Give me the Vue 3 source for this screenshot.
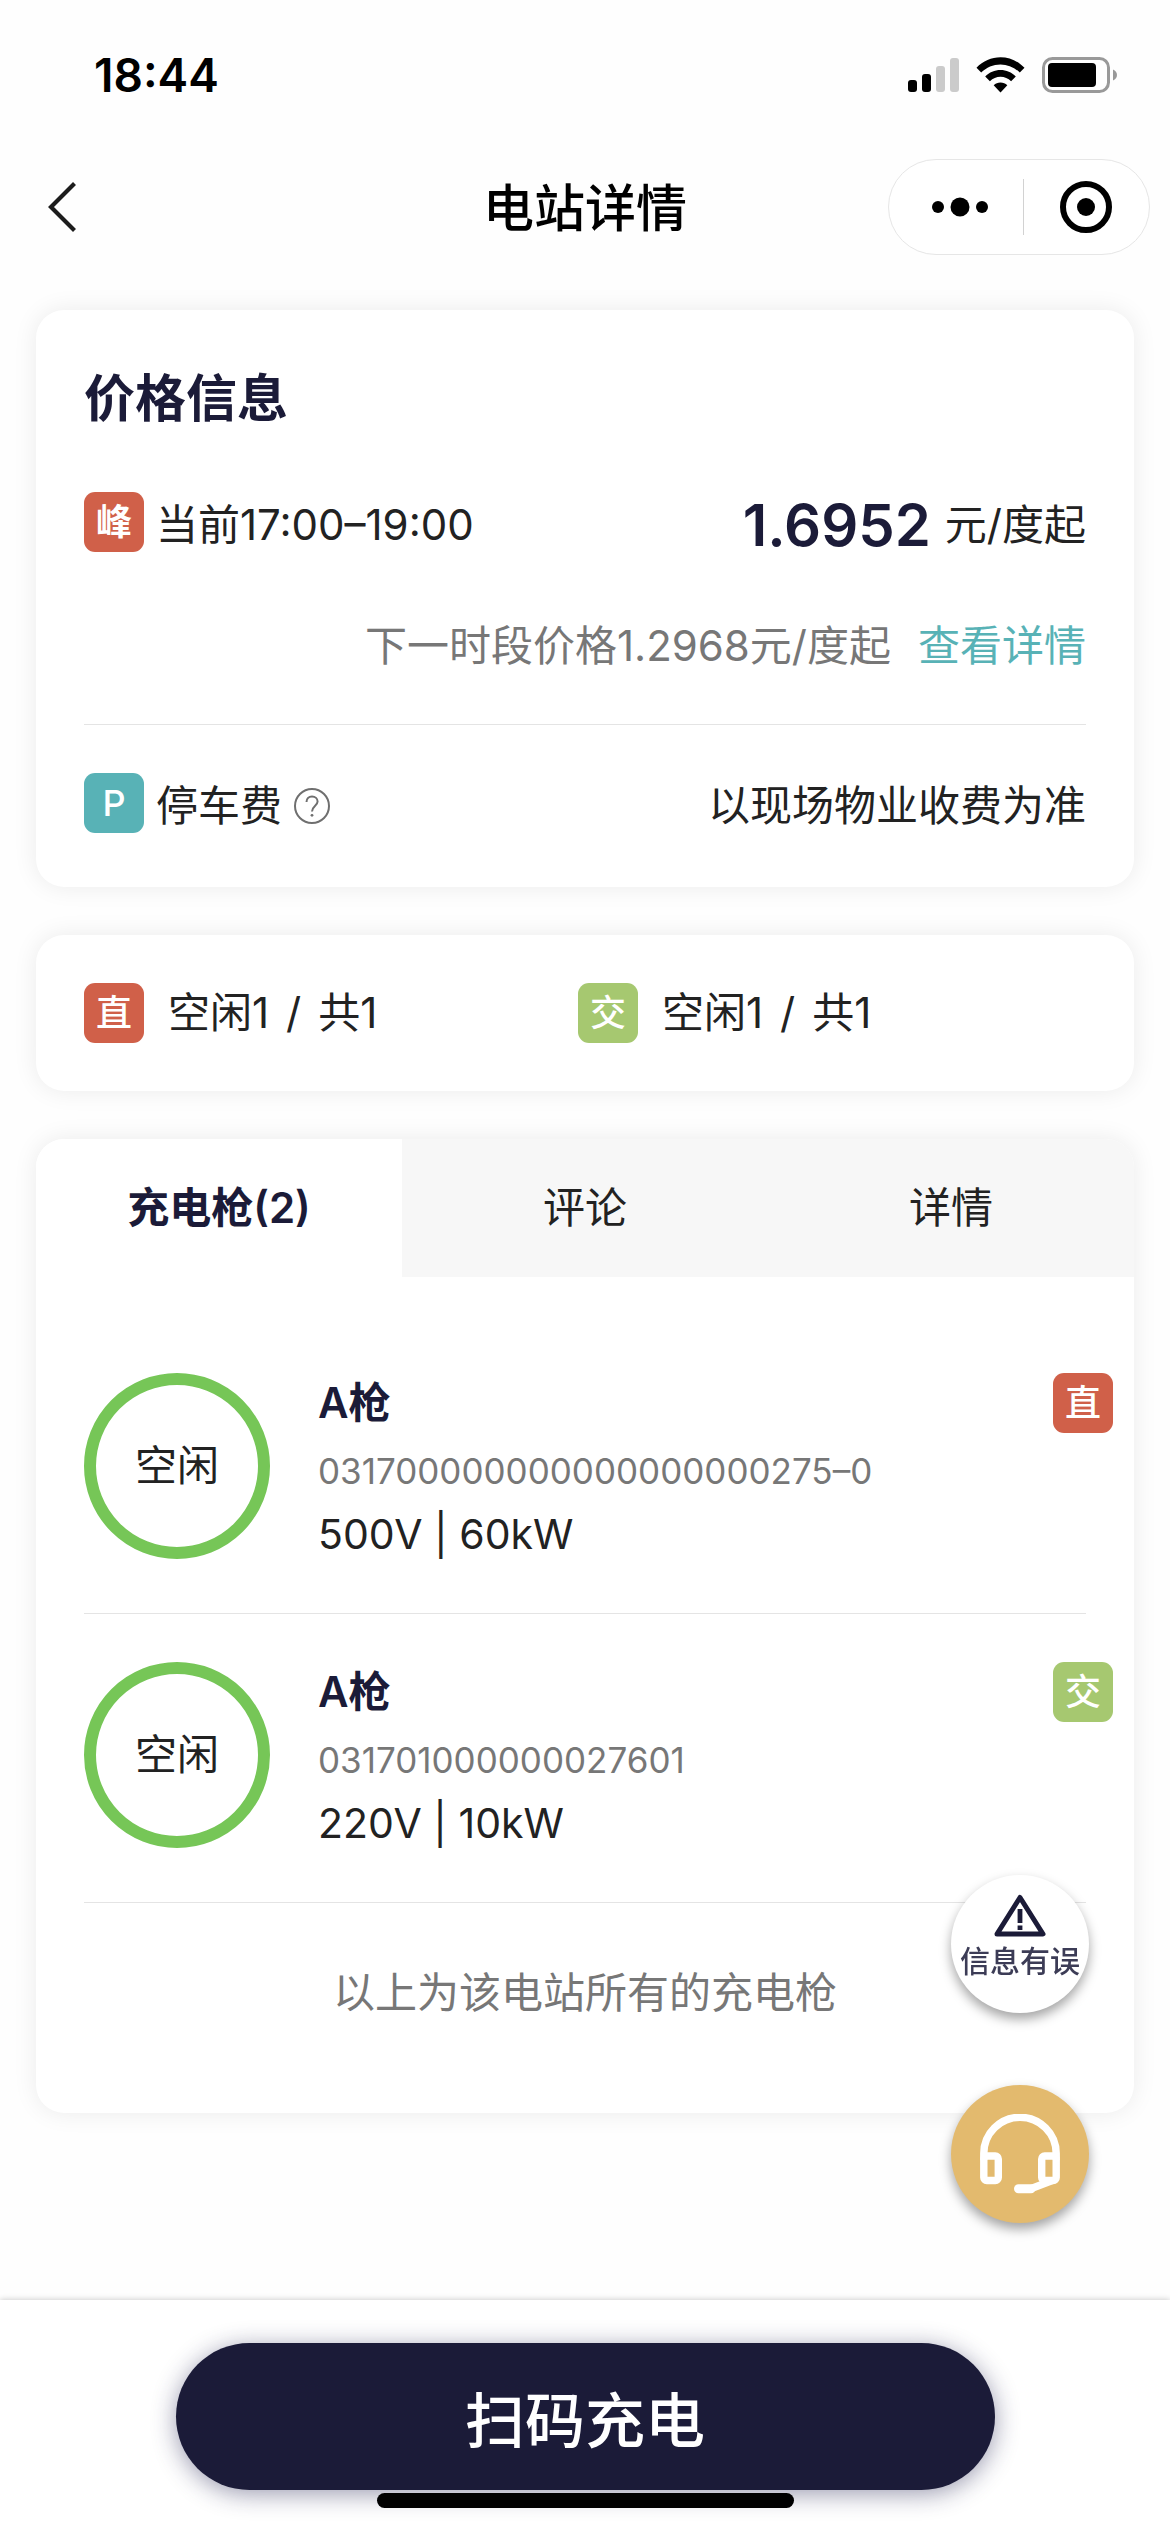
<script setup>
import { ref } from 'vue'

const tabs = ['充电枪(2)', '评论', '详情']
const activeTab = ref(0)

const summary = [
  { kind: 'dc', label: '直', free: '空闲1', total: '共1' },
  { kind: 'ac', label: '交', free: '空闲1', total: '共1' },
]

const guns = [
  { name: 'A枪', id: '031700000000000000000275–0', spec: '500V | 60kW', status: '空闲', kind: 'dc', label: '直' },
  { name: 'A枪', id: '031701000000027601', spec: '220V | 10kW', status: '空闲', kind: 'ac', label: '交' },
]
</script>

<template>
  <div class="page">
    <header class="top">
      <div class="status">
        <span class="clock">18:44</span>
        <div class="indicators">
          <svg width="51" height="36" viewBox="0 0 51 36" aria-hidden="true">
            <rect x="0" y="23" width="9" height="12" rx="3" />
            <rect x="14" y="17" width="9" height="18" rx="3" />
            <rect x="28" y="9" width="9" height="26" rx="3" fill="#cbcbcb" />
            <rect x="42" y="1" width="9" height="34" rx="3" fill="#cbcbcb" />
          </svg>
          <svg class="wifi" width="49" height="36" viewBox="0 0 49 36" aria-hidden="true">
            <path d="M0.500 10.800C7 4 15.500 0.300 24.500 0.300S42 4 48.500 10.800L43.800 15.600C38.600 10.200 31.800 7.400 24.500 7.400S10.400 10.200 5.200 15.600Z" />
            <path d="M9.200 19.400C13.300 15.300 18.700 13 24.500 13S35.700 15.300 39.800 19.400L35.100 24.200C32.200 21.400 28.500 19.800 24.500 19.800S16.800 21.400 13.900 24.200Z" />
            <path d="M17.700 28.200C19.500 26.500 21.900 25.500 24.500 25.500S29.500 26.500 31.300 28.200L24.500 35.500Z" />
          </svg>
          <svg width="76" height="36" viewBox="0 0 76 36" aria-hidden="true">
            <rect x="1.500" y="1.500" width="65" height="33" rx="9" fill="none" stroke="#999" stroke-width="3" />
            <rect x="6" y="6" width="48" height="24" rx="4" />
            <path d="M71 12.500C73.500 13.500 75 15.500 75 18S73.500 22.500 71 23.500Z" fill="#999" />
          </svg>
        </div>
      </div>
      <nav class="nav">
        <button class="back" type="button" aria-label="返回">
          <svg width="30" height="50" viewBox="0 0 30 50" aria-hidden="true">
            <path d="M26.500 1.500L3 25L26.500 48.500" fill="none" stroke="#1c1c1c" stroke-width="4.200" />
          </svg>
        </button>
        <h1 class="nav-title">电站详情</h1>
        <div class="capsule">
          <button class="cap-btn more" type="button" aria-label="更多">
            <svg width="58" height="20" viewBox="0 0 58 20" aria-hidden="true">
              <circle cx="7" cy="10" r="6" />
              <circle cx="29" cy="10" r="9.500" />
              <circle cx="51" cy="10" r="6" />
            </svg>
          </button>
          <span class="cap-line"></span>
          <button class="cap-btn" type="button" aria-label="关闭">
            <svg width="52" height="52" viewBox="0 0 52 52" aria-hidden="true">
              <circle cx="26" cy="26" r="23" fill="none" stroke="#000" stroke-width="6" />
              <circle cx="26" cy="26" r="9" />
            </svg>
          </button>
        </div>
      </nav>
    </header>

    <main class="content">
      <section class="card price">
        <h2 class="card-title">价格信息</h2>
        <div class="row">
          <span class="badge peak">峰</span>
          <span class="row-label">当前17:00–19:00</span>
          <strong class="amount">1.6952</strong>
          <span class="unit">元/度起</span>
        </div>
        <p class="next">
          <span>下一时段价格1.2968元/度起</span>
          <a class="link" href="#detail">查看详情</a>
        </p>
        <div class="row parking">
          <span class="badge park">P</span>
          <span class="row-label">停车费</span>
          <button class="help" type="button" aria-label="停车费说明">
            <svg width="38" height="38" viewBox="0 0 38 38" fill="none" stroke="#6f6f6f" stroke-width="2" aria-hidden="true">
              <circle cx="19" cy="19" r="17" />
              <path d="M13.500 15C13.500 11.500 15.800 9.400 19 9.400S24.600 11.600 24.600 14.600C24.600 18.600 19 19 19 24.600" />
              <circle cx="19" cy="28.300" r="1.400" fill="#6f6f6f" stroke="none" />
            </svg>
          </button>
          <span class="fee">以现场物业收费为准</span>
        </div>
      </section>

      <section class="card summary">
        <div v-for="item in summary" :key="item.kind" class="summary-item">
          <span class="badge" :class="item.kind">{{ item.label }}</span>
          <span class="count">
            <span>{{ item.free }}</span>
            <span>/</span>
            <span>{{ item.total }}</span>
          </span>
        </div>
      </section>

      <section class="card guns">
        <div class="tabs" role="tablist">
          <button
            v-for="(tab, i) in tabs"
            :key="tab"
            type="button"
            role="tab"
            class="tab"
            :class="{ active: i === activeTab }"
            :aria-selected="i === activeTab"
            @click="activeTab = i"
          >{{ tab }}</button>
        </div>
        <ul class="gun-list">
          <li v-for="gun in guns" :key="gun.id" class="gun">
            <span class="ring">{{ gun.status }}</span>
            <div class="info">
              <h3 class="gun-name">{{ gun.name }}</h3>
              <p class="gun-id">{{ gun.id }}</p>
              <p class="gun-spec">{{ gun.spec }}</p>
            </div>
            <span class="badge gun-badge" :class="gun.kind">{{ gun.label }}</span>
          </li>
        </ul>
        <p class="end">以上为该电站所有的充电枪</p>
      </section>
    </main>

    <div class="floaters">
      <button class="float report" type="button">
        <svg width="52" height="44" viewBox="0 0 52 44" aria-hidden="true">
          <path d="M26 3.500L49 40H3Z" fill="none" stroke="#1b1b38" stroke-width="5" stroke-linejoin="round" />
          <path d="M23.600 15H28.400V29H23.600ZM23.600 31.500H28.400V36H23.600Z" fill="#1b1b38" />
        </svg>
        <span>信息有误</span>
      </button>
      <button class="float service" type="button" aria-label="联系客服">
        <svg width="80" height="80" viewBox="0 0 80 80" fill="none" stroke="#fff" stroke-width="7.400" stroke-linejoin="round" stroke-linecap="round" aria-hidden="true">
          <path d="M3.800 44V39.500A36.200 36.200 0 0 1 76.200 39.500V44" />
          <rect x="3.800" y="42" width="14.500" height="24.500" rx="3" />
          <rect x="61.700" y="42" width="14.500" height="24.500" rx="3" />
          <path d="M71 67L52 74.300" />
          <path d="M38.500 74.800H51" stroke-width="9" />
        </svg>
      </button>
    </div>

    <footer class="bottom">
      <button class="scan" type="button">扫码充电</button>
      <span class="home-bar"></span>
    </footer>
  </div>
</template>

<style>
body {
  margin: 0;
  background: #fff;
}
</style>

<style scoped>
.page {
  position: relative;
  display: flex;
  flex-direction: column;
  min-height: 100vh;
  background: #fefefe;
  color: #222;
  font-family: Inter, "Noto Sans CJK SC", sans-serif;
  font-size: 42px;
  line-height: 60px;
}

button {
  margin: 0;
  padding: 0;
  border: 0;
  background: none;
  color: inherit;
  font: inherit;
}

h1, h2, h3, p, ul {
  margin: 0;
  padding: 0;
}

svg {
  display: block;
}

.status {
  display: flex;
  align-items: center;
  justify-content: space-between;
  height: 150px;
  padding: 0 52px 0 94px;
  box-sizing: border-box;
  color: #000;
}

.clock {
  font-size: 46px;
  font-weight: 600;
}

.indicators {
  display: flex;
  align-items: center;
  gap: 17px;
}

.nav {
  display: grid;
  grid-template-columns: 1fr auto 1fr;
  align-items: center;
  height: 114px;
  padding: 0 20px;
}

.back {
  justify-self: start;
  margin-left: 28px;
}

.nav-title {
  padding-top: 4px;
  color: #000;
  font-size: 51px;
  font-weight: 500;
}

.capsule {
  justify-self: end;
  display: flex;
  align-items: center;
  width: 262px;
  height: 96px;
  box-sizing: border-box;
  border: 1px solid #e6e6e6;
  border-radius: 48px;
  background: #fff;
}

.cap-btn {
  flex: 1;
  display: flex;
  justify-content: center;
}

.more {
  box-sizing: border-box;
  padding-left: 8px;
}

.cap-line {
  width: 1px;
  height: 56px;
  background: #d2d2d2;
}

.content {
  flex: 1;
  display: flex;
  flex-direction: column;
  gap: 48px;
  padding: 46px 36px 48px;
}

.card {
  border-radius: 28px;
  background: #fff;
  box-shadow: 0 0 24px rgba(0, 0, 0, 0.08);
}

.price {
  padding: 50px 48px 54px;
}

.card-title {
  margin-bottom: 54px;
  color: #1b1b38;
  font-size: 51px;
  font-weight: 600;
  line-height: 78px;
}

.row {
  display: flex;
  align-items: center;
  height: 60px;
}

.row > :not(.badge) {
  padding-top: 6px;
}

.badge {
  flex: none;
  width: 60px;
  height: 60px;
  border-radius: 11px;
  color: #fff;
  font-size: 36px;
  font-weight: 500;
  text-align: center;
}

.peak, .dc {
  background: #d06049;
}

.peak {
  font-weight: 700;
}

.park {
  background: #58b2b6;
}

.ac {
  background: #a6c870;
}

.row-label {
  margin-left: 12px;
}

.amount {
  margin-left: auto;
  color: #1b1b38;
  font-size: 58px;
  font-weight: 600;
}

.unit {
  margin-left: 14px;
}

.next {
  display: flex;
  justify-content: flex-end;
  gap: 27px;
  margin: 64px 0 48px;
  color: #777;
}

.link {
  color: #58b2b6;
  text-decoration: none;
}

.parking {
  padding-top: 48px;
  border-top: 1px solid #e4e4e4;
}

.help {
  margin-left: 11px;
}

.fee {
  margin-left: auto;
}

.summary {
  display: grid;
  grid-template-columns: 494px 1fr;
  padding: 48px;
}

.summary-item {
  display: flex;
  gap: 24px;
}

.count {
  display: flex;
  gap: 17px;
}

.guns {
  overflow: hidden;
}

.tabs {
  display: flex;
}

.tab {
  flex: 1;
  height: 138px;
  background: #f7f7f7;
}

.tab.active {
  background: #fff;
  color: #1b1b38;
  font-weight: 600;
}

.gun-list {
  padding: 48px 48px 0;
  list-style: none;
}

.gun {
  display: flex;
  align-items: flex-start;
  padding: 48px 0 54px;
  border-bottom: 1px solid #e4e4e4;
}

.ring {
  display: flex;
  align-items: center;
  justify-content: center;
  width: 186px;
  height: 186px;
  box-sizing: border-box;
  border: 12px solid #76c657;
  border-radius: 50%;
}

.info {
  flex: 1;
  margin-left: 48px;
}

.gun-name {
  color: #1b1b38;
  font-size: 42px;
  font-weight: 600;
}

.gun-id {
  color: #777;
  font-size: 35px;
  line-height: 76px;
}

.gun-spec {
  font-size: 41px;
  line-height: 50px;
}

.gun-badge {
  margin-right: -27px;
}

.end {
  padding: 60px 0 90px;
  color: #777;
  text-align: center;
}

.floaters {
  position: fixed;
  right: 81px;
  bottom: 309px;
  display: flex;
  flex-direction: column;
  gap: 72px;
}

.float {
  display: flex;
  flex-direction: column;
  align-items: center;
  width: 138px;
  height: 138px;
  border-radius: 50%;
  box-shadow: 0 6px 12px rgba(0, 0, 0, 0.36);
}

.report {
  padding-top: 19px;
  box-sizing: border-box;
  background: #fff;
  color: #3c3c56;
  font-size: 30px;
  font-weight: 500;
  line-height: 46px;
}

.service {
  justify-content: center;
  background: #e3ba6e;
}

.bottom {
  display: flex;
  flex-direction: column;
  align-items: center;
  gap: 3px;
  padding: 43px 0 24px;
  background: #fff;
  box-shadow: 0 0 6px rgba(0, 0, 0, 0.24);
}

.scan {
  width: 70%;
  height: 147px;
  padding-top: 8px;
  border-radius: 74px;
  background: #1b1b38;
  box-shadow: 0 4px 24px rgba(27, 27, 76, 0.44);
  color: #fff;
  font-size: 60px;
  font-weight: 500;
}

.home-bar {
  width: 417px;
  height: 15px;
  border-radius: 8px;
  background: #000;
}
</style>
